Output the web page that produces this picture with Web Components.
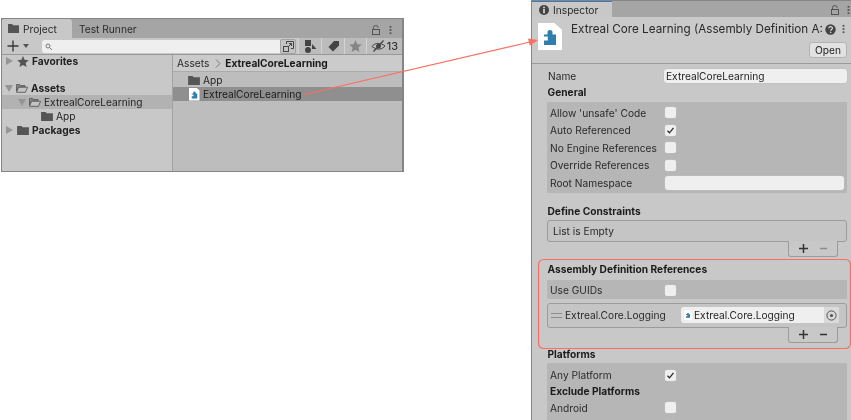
<!DOCTYPE html>
<html lang="en"><head><meta charset="utf-8"><title>Unity Assembly Definition</title>
<style>
html,body{margin:0;padding:0;background:#fff;width:851px;height:420px;overflow:hidden}
body{font:10.2px/14px Inter,"Liberation Sans",sans-serif;color:#1e1e1e;position:relative}
</style></head><body>
<template id="i-folder"><svg width="12" height="10" viewBox="0 0 13 11"><path d="M0 1h5l1 1.500h7V11H0z" fill="#555"/></svg></template>
<template id="i-open"><svg width="12" height="10" viewBox="0 0 14 11"><path d="M.5 1.500h4l1 1.200h5v1.800H3L.5 9z" fill="#8a8a8a" stroke="#555" stroke-width="1"/><path d="M3 4.600h10.500L11 10.500H.6z" fill="#c4c4c4" stroke="#555" stroke-width="1"/></svg></template>
<template id="i-asm"><svg viewBox="0 0 24 27" width="100%" height="100%" style="display:block"><path d="M6 11.500h3.500V9c0-2.700 5-2.700 5 0v2.500H18V22H6v-4.500h3.800v-4H6z" fill="#2f7eab"/></svg></template>
<template id="i-lock"><svg width="8" height="10" viewBox="0 0 8 10"><path d="M1.500 4.500V2.800a2.300 2.300 0 0 1 4.600 0" fill="none" stroke="#555" stroke-width="1"/><rect x=".5" y="4.500" width="7" height="5" fill="none" stroke="#555"/></svg></template>
<template id="i-dots"><svg width="3" height="10" viewBox="0 0 3 11"><g fill="#555"><rect x=".5" y="1" width="2" height="2"/><rect x=".5" y="4.500" width="2" height="2"/><rect x=".5" y="8" width="2" height="2"/></g></svg></template>

<ux-project style="left:1px;top:18px"></ux-project>
<ux-inspector style="left:531px;top:0"></ux-inspector>
<ux-annotations></ux-annotations>

<script>
const icon = id => document.getElementById('i-'+id).innerHTML;

function el(name, css, html){
  customElements.define(name, class extends HTMLElement{
    connectedCallback(){
      if(this.shadowRoot) return;
      const s=this.attachShadow({mode:'open'});
      s.innerHTML=`<style>${css}</style>`+(typeof html==='function'?html(this):html);
    }
  });
}

/* ---- shared controls ---- */
el('ux-check',`:host{display:block;width:11px;height:11px;border-radius:2px;background:#efefef;box-shadow:0 0 0 .5px #bdbdbd}svg{display:block}`,
  h=>h.hasAttribute('on')?`<svg width="11" height="11" viewBox="0 0 11 11"><path d="M2.500 5.800l2 2 4-5" fill="none" stroke="#2b2b2b" stroke-width="1.300"/></svg>`:'');
el('ux-field',`:host{display:block;background:#efefef;border-radius:3px;box-shadow:0 0 0 .5px #bdbdbd;height:14px;line-height:14px;padding-left:2px;color:#1e1e1e}`,`<slot></slot>`);
el('ux-row',`:host{display:grid;grid-template-columns:115px 1fr;align-items:center;height:17.500px;padding-left:3px;color:#2a2a2a;white-space:nowrap}
  .v{display:flex;align-items:center;padding-right:3px}.v ::slotted(ux-field){flex:1}`,
  `<span><slot name="label"></slot></span><div class="v"><slot></slot></div>`);
el('ux-group',`:host{display:block;background:#b6b6b6;padding:2px 0 1px;border-radius:1px}`,`<slot></slot>`);
el('ux-heading',`:host{display:block;font-weight:700;height:17px;line-height:17px;padding-left:.5px;color:#1c1c1c;white-space:nowrap}`,`<slot></slot>`);
el('ux-list',`:host{display:block;position:relative;background:#c5c5c5;border:1px solid #9c9c9c;border-radius:3px;box-sizing:border-box;color:#2a2a2a}`,`<slot></slot>`);
el('ux-list-footer',`:host{display:flex;justify-content:space-around;align-items:center;width:50px;height:16px;margin:-1px 9px 0 auto;box-sizing:border-box;background:#c8c8c8;border:1px solid #9c9c9c;border-top:0;border-radius:0 0 3px 3px;position:relative;padding:0 4px}
  svg{display:block}`,
  h=>{const c=h.hasAttribute('off')?'#8b8b8b':'#333';
    return `<svg width="11" height="11" viewBox="0 0 11 11"><path d="M5.500 1v9M1 5.500h9" stroke="#333" stroke-width="1.500"/></svg><svg width="11" height="11" viewBox="0 0 11 11"><path d="M2 5.500h7" stroke="${c}" stroke-width="1.500"/></svg>`});

/* ---- project window ---- */
el('ux-tab',`:host{display:flex;align-items:center;gap:4px;height:100%;padding:0 0 0 6px;box-sizing:border-box;color:#2a2a2a}
  :host([active]){background:#c8c8c8;border-radius:3px 3px 0 0}`,`<slot></slot>`);
el('ux-tree-row',`:host{display:flex;align-items:center;height:14px;white-space:nowrap;color:#242424}
  :host([sel]){background:#b2b2b2}
  :host([bold]){font-weight:700}
  .tw{width:0;height:0;flex:none;border:solid transparent}
  .r{border-width:4px 0 4px 7px;border-left-color:#959595;margin-right:4px}
  .d{border-width:7px 4px 0;border-top-color:#959595;margin-right:3px}
  .n{width:7px;flex:none;margin-right:4px}
  .i{display:flex;margin-right:3px;flex:none}`,
  h=>{const t=h.getAttribute('tw');
    return `<div style="width:${+h.getAttribute('ind')||0}px;flex:none"></div><div class="${t==='r'?'tw r':t==='d'?'tw d':'n'}"></div><span class="i"><slot name="i"></slot></span><slot></slot>`});
el('ux-asset-row',`:host{display:flex;align-items:center;height:14px;padding-left:15px;white-space:nowrap;color:#242424;gap:3px}
  :host([sel]){background:#8f8f8f;height:14px;color:#1a1a1a}.i{display:flex;width:12px;justify-content:center;flex:none}`,
  `<span class="i"><slot name="i"></slot></span><slot></slot>`);
el('ux-asm',`:host{display:block;width:var(--w,11px);height:var(--h,13px);background:#fff;clip-path:polygon(0 0,70% 0,100% 24%,100% 100%,0 100%);position:relative}`,
  `${icon('asm')}`);
el('ux-tool-cell',`:host{display:flex;align-items:center;justify-content:center;background:#bcbcbc;height:16px;box-sizing:border-box;border-left:1px solid #d4d4d4}`,`<slot></slot>`);

el('ux-project',`:host{position:absolute;display:flex;flex-direction:column;width:403px;height:154px;box-sizing:border-box;border:1px solid #858585;border-width:1px 2px 1px 1px;background:#c8c8c8;overflow:hidden;filter:blur(.3px)}
  .tabs{display:flex;height:19px;background:#a5a5a5;flex:none;padding-left:0}
  .tabs .sp{flex:1}.tabs .ctl{display:flex;gap:9px;align-items:center;padding:2px 10px 0 0;}
  .tool{display:flex;align-items:center;height:16px;flex:none;border-bottom:1px solid #989898;background:#c8c8c8;box-sizing:content-box}
  .add{display:flex;align-items:center;width:40px;padding-left:5px;box-sizing:border-box;gap:4px;flex:none}
  .search{width:238px;height:13px;background:#efefef;border-radius:3px 0 0 3px;flex:none;display:flex;align-items:center;padding-left:3px;box-sizing:border-box}
  .sbtn{width:16px;height:15px;background:#c4c4c4;border:1px solid #a3a3a3;box-sizing:border-box;border-radius:2px;margin-right:2px;display:flex;align-items:center;justify-content:center;flex:none}
  .main{flex:1;display:flex;min-height:0}
  .tree{width:170px;flex:none;border-right:1px solid #a2a2a2;box-sizing:content-box}
  .right{flex:1;background:#bdbdbd;display:flex;flex-direction:column}
  .crumb{display:flex;align-items:center;height:16px;background:#cbcbcb;border-bottom:1px solid #ababab;padding-left:4px;flex:none;color:#2a2a2a}
  .crumb b{color:#1a1a1a;font-weight:700}.crumb svg{margin:0 4px 0 6px}
  .rows{padding-top:1px}
  ux-tool-cell.a{width:23px}ux-tool-cell.b{width:23px}ux-tool-cell.c{width:22px}ux-tool-cell.d{flex:1;gap:1px;color:#222;font-size:11px}`,
  ()=>`<div class="tabs">
    <ux-tab active style="width:70px"><svg width="11" height="9" viewBox="0 0 13 10" preserveAspectRatio="none"><path d="M0 0h5l1 1.500h7V10H0z" fill="#555"/></svg>Project</ux-tab>
    <ux-tab style="width:90px;padding-left:7px">Test Runner</ux-tab>
    <div class="sp"></div><div class="ctl">${icon('lock')}${icon('dots')}</div>
  </div>
  <div class="tool">
    <div class="add"><svg width="12" height="12" viewBox="0 0 12 12"><path d="M6 .5v11M.5 6h11" stroke="#3a3a3a" stroke-width="1.400"/></svg><svg width="6" height="4" viewBox="0 0 6 4"><path d="M0 0h6L3 4z" fill="#555"/></svg></div>
    <div class="search"><svg width="7" height="7" viewBox="0 0 7 7"><circle cx="3" cy="3" r="2" fill="none" stroke="#777"/><path d="M4.500 4.500L7 7" stroke="#777"/></svg></div>
    <div class="sbtn"><svg width="11" height="11" viewBox="0 0 11 11" fill="none" stroke="#444"><rect x=".5" y="5.500" width="5" height="5" fill="#c4c4c4"/><path d="M3.500 3V.5h7v7H8"/><path d="M5 6l3.500-3.500M6 2.500h2.500V5"/></svg></div>
    <ux-tool-cell class="a"><svg width="13" height="13" viewBox="0 0 13 13" fill="#444"><rect x="1" y="0" width="6" height="6"/><circle cx="4" cy="10" r="3"/><path d="M8 4l4.500 5H8z"/></svg></ux-tool-cell>
    <ux-tool-cell class="b"><svg width="13" height="12" viewBox="0 0 13 12" fill="#444"><path d="M7 1h5v4.500L6 11.500 1.500 7z"/></svg></ux-tool-cell>
    <ux-tool-cell class="c"><svg width="13" height="12" viewBox="0 0 13 12" fill="#858585"><path d="M6.500 0l1.800 4.200 4.500.4-3.400 3 1 4.400-3.900-2.300L2.600 12l1-4.400-3.400-3 4.500-.4z"/></svg></ux-tool-cell>
    <ux-tool-cell class="d"><svg width="15" height="12" viewBox="0 0 15 12" fill="none" stroke="#444"><path d="M1 6.500C3.500 3 9 2 14 6c-2.500 3.500-8 4.500-13 .5z"/><circle cx="7.500" cy="6.200" r="2" fill="#444"/><path d="M2.500 11.500L12.500.5" stroke-width="1.200"/></svg>13</ux-tool-cell>
  </div>
  <div class="main">
    <div class="tree">
      <ux-tree-row bold tw="r" ind="4" style="margin:-1px 0 13px"><svg slot="i" width="12" height="11" viewBox="0 0 13 12" fill="#555"><path d="M6.500 0l1.800 4.200 4.500.4-3.400 3 1 4.400-3.900-2.300L2.600 12l1-4.400-3.400-3 4.500-.4z"/></svg>Favorites</ux-tree-row>
      <ux-tree-row bold tw="d" ind="3"><span slot="i" style="display:flex">${icon('open')}</span>Assets</ux-tree-row>
      <ux-tree-row sel tw="d" ind="16"><span slot="i" style="display:flex">${icon('open')}</span>ExtrealCoreLearning</ux-tree-row>
      <ux-tree-row tw="n" ind="28"><span slot="i" style="display:flex">${icon('folder')}</span>App</ux-tree-row>
      <ux-tree-row bold tw="r" ind="4"><span slot="i" style="display:flex">${icon('folder')}</span>Packages</ux-tree-row>
    </div>
    <div class="right">
      <div class="crumb">Assets<svg width="6" height="9" viewBox="0 0 6 9"><path d="M1 .5l4 4-4 4" fill="none" stroke="#777"/></svg><b>ExtrealCoreLearning</b></div>
      <div class="rows">
        <ux-asset-row><span slot="i" style="display:flex">${icon('folder')}</span>App</ux-asset-row>
        <ux-asset-row sel><ux-asm slot="i"></ux-asm>ExtrealCoreLearning</ux-asset-row>
      </div>
    </div>
  </div>`);

/* ---- inspector window ---- */
el('ux-inspector',`:host{position:absolute;display:flex;flex-direction:column;width:320px;height:420px;box-sizing:border-box;border:solid #858585;border-width:1px 0 0 1px;background:#c8c8c8;overflow:hidden;filter:blur(.3px)}
  .tabs{display:flex;align-items:stretch;height:16px;background:#a5a5a5;flex:none}
  .tab{display:flex;align-items:center;gap:4px;width:80px;box-sizing:border-box;padding-left:7px;background:#c8c8c8;border-top:1px solid #3a79bb;color:#2a2a2a}
  .sp{flex:1}.ctl{display:flex;gap:8px;align-items:center;padding:2px 1px 0 0}
  .head{position:relative;display:grid;grid-template-columns:33px 1fr 14px 14px;grid-template-rows:24px 23px;height:47px;box-sizing:border-box;border-bottom:1px solid #9a9a9a;flex:none;background:#cacaca;padding-left:6px}
  .icowrap{grid-row:1/3;margin-top:6px;width:24px;height:27px;filter:drop-shadow(0 0 .7px #777);}
  .title{font-size:11.700px;line-height:24px;white-space:nowrap;overflow:hidden;color:#2a2a2a}
  .q,.d2{display:flex;align-items:center;justify-content:center}
  .d2{margin-left:-1px}
  .open{grid-column:2/5;justify-self:end;width:38px;height:16px;margin:1px 4px 0 0;box-sizing:border-box;background:#e2e2e2;border:1px solid #b3b3b3;border-radius:3px;display:flex;align-items:center;justify-content:center;color:#222}
  .body{padding:4px 4px 0 15px;color:#2a2a2a}
  .name{display:grid;grid-template-columns:116px 1fr;height:16px;align-items:center;padding-left:1px}
  .list1{height:22px;display:flex;align-items:center;padding-left:5px}
  .l2{display:flex;align-items:center;padding:0 3px 0 3px}
  .l2 .h{width:11px;height:3px;border:solid #8c8c8c;border-width:1px 0;margin-right:3px;flex:none}
  .l2 .n{width:116px;flex:none}
  .obj{flex:1;display:flex;align-items:center;height:16px;background:#efefef;border-radius:3px;padding-left:3px;position:relative;color:#242424;--w:8px;--h:10px;gap:2px;margin-right:4px}
  .pick{margin-left:auto;width:15px;height:16px;background:#dadada;border-radius:0 3px 3px 0;display:flex;align-items:center;justify-content:center}`,
  ()=>`<div class="tabs"><div class="tab"><svg width="10" height="10" viewBox="0 0 10 10"><circle cx="5" cy="5" r="5" fill="#444"/><rect x="4.200" y="1.600" width="1.600" height="1.700" fill="#ddd"/><rect x="4.200" y="4" width="1.600" height="4.200" fill="#ddd"/></svg>Inspector</div><div class="sp"></div><div class="ctl">${icon('lock')}${icon('dots')}</div></div>
  <div class="head">
    <div class="icowrap"><ux-asm style="--w:24px;--h:27px"></ux-asm></div>
    <div class="title">Extreal Core Learning (Assembly Definition A:</div>
    <div class="q"><svg width="11" height="11" viewBox="0 0 11 11"><circle cx="5.500" cy="5.500" r="5.200" fill="#444"/><path d="M3.800 4.200c0-2.200 3.600-2.200 3.600 0 0 1.400-1.800 1.300-1.800 2.600" fill="none" stroke="#ddd" stroke-width="1.200"/><rect x="5" y="7.700" width="1.300" height="1.300" fill="#ddd"/></svg></div>
    <div class="d2">${icon('dots')}</div>
    <div class="open">Open</div>
  </div>
  <div class="body">
    <div class="name"><span>Name</span><ux-field>ExtrealCoreLearning</ux-field></div>
    <ux-heading>General</ux-heading>
    <ux-group style="margin-top:1px">
      <ux-row><span slot="label">Allow 'unsafe' Code</span><ux-check></ux-check></ux-row>
      <ux-row><span slot="label">Auto Referenced</span><ux-check on></ux-check></ux-row>
      <ux-row><span slot="label">No Engine References</span><ux-check></ux-check></ux-row>
      <ux-row><span slot="label">Override References</span><ux-check></ux-check></ux-row>
      <ux-row><span slot="label">Root Namespace</span><ux-field></ux-field></ux-row>
    </ux-group>
    <ux-heading style="margin-top:10px">Define Constraints</ux-heading>
    <ux-list class="list1">List is Empty</ux-list>
    <ux-list-footer off></ux-list-footer>
    <ux-heading style="margin-top:4px">Assembly Definition References</ux-heading>
    <ux-group style="margin-top:2px;padding:2px 0 0;height:17px"><ux-row><span slot="label">Use GUIDs</span><ux-check></ux-check></ux-row></ux-group>
    <ux-list class="l2" style="margin-top:4px;height:25px"><span class="h"></span><span class="n">Extreal.Core.Logging</span><span class="obj"><ux-asm></ux-asm>Extreal.Core.Logging<span class="pick"><svg width="11" height="11" viewBox="0 0 11 11"><circle cx="5.500" cy="5.500" r="4.600" fill="none" stroke="#555"/><circle cx="5.500" cy="5.500" r="1.600" fill="#555"/></svg></span></span></ux-list>
    <ux-list-footer></ux-list-footer>
    <ux-heading style="margin-top:3px">Platforms</ux-heading>
    <ux-group style="padding-top:4px">
      <ux-row><span slot="label">Any Platform</span><ux-check on></ux-check></ux-row>
      <ux-heading style="padding-left:3px;height:15px;line-height:15px">Exclude Platforms</ux-heading>
      <ux-row><span slot="label">Android</span><ux-check></ux-check></ux-row>
      <ux-row><span slot="label"></span><ux-check></ux-check></ux-row>
    </ux-group>
  </div>`);

/* ---- annotation overlay ---- */
el('ux-annotations',`:host{position:absolute;left:0;top:0;width:851px;height:420px;pointer-events:none}svg{display:block}`,
  `<svg width="851" height="420" viewBox="0 0 851 420"><path d="M304 94.500L530 42" stroke="#fb6f60" stroke-width="1.200" fill="none"/><path d="M538 40l-10-1.600 1.800 7.400z" fill="#fb6f60"/><rect x="538.500" y="259.500" width="312" height="89" rx="5" fill="none" stroke="#fb6f60" stroke-width="1.200"/></svg>`);
</script>
</body></html>
